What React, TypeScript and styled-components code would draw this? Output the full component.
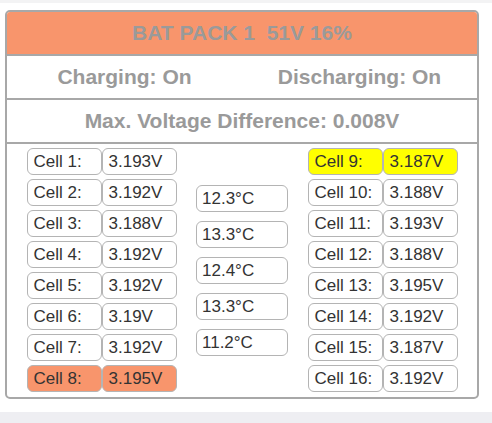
import styled, { createGlobalStyle } from "styled-components";

const GlobalStyle = createGlobalStyle`
  html, body {
    margin: 0;
    padding: 0;
    background: #ffffff;
    font-family: "Liberation Sans", Arial, sans-serif;
  }
`;

type Cell = { name: string; volt: string; tone?: "low" | "high" };

const leftCells: Cell[] = [
  { name: "Cell 1:", volt: "3.193V" },
  { name: "Cell 2:", volt: "3.192V" },
  { name: "Cell 3:", volt: "3.188V" },
  { name: "Cell 4:", volt: "3.192V" },
  { name: "Cell 5:", volt: "3.192V" },
  { name: "Cell 6:", volt: "3.19V" },
  { name: "Cell 7:", volt: "3.192V" },
  { name: "Cell 8:", volt: "3.195V", tone: "high" },
];

const rightCells: Cell[] = [
  { name: "Cell 9:", volt: "3.187V", tone: "low" },
  { name: "Cell 10:", volt: "3.188V" },
  { name: "Cell 11:", volt: "3.193V" },
  { name: "Cell 12:", volt: "3.188V" },
  { name: "Cell 13:", volt: "3.195V" },
  { name: "Cell 14:", volt: "3.192V" },
  { name: "Cell 15:", volt: "3.187V" },
  { name: "Cell 16:", volt: "3.192V" },
];

const temps = ["12.3°C", "13.3°C", "12.4°C", "13.3°C", "11.2°C"];

const App: React.FC = () => {
  return (
    <>
      <GlobalStyle />
      <Page>
        <TopStrip />
        <Main>
          <Panel>
            <Header>BAT PACK 1&nbsp;&nbsp;51V 16%</Header>
            <StatusRow>
              <span>Charging: On</span>
              <span>Discharging: On</span>
            </StatusRow>
            <InfoRow>Max. Voltage Difference: 0.008V</InfoRow>
            <CellsArea>
              <CellColumn>
                {leftCells.map((c) => (
                  <CellPair key={c.name}>
                    <Box $tone={c.tone}>{c.name}</Box>
                    <Box $tone={c.tone}>{c.volt}</Box>
                  </CellPair>
                ))}
              </CellColumn>
              <TempColumn>
                {temps.map((t, i) => (
                  <TempBox key={i}>{t}</TempBox>
                ))}
              </TempColumn>
              <CellColumn>
                {rightCells.map((c) => (
                  <CellPair key={c.name}>
                    <Box $tone={c.tone}>{c.name}</Box>
                    <Box $tone={c.tone}>{c.volt}</Box>
                  </CellPair>
                ))}
              </CellColumn>
            </CellsArea>
          </Panel>
        </Main>
        <BottomStrip />
      </Page>
    </>
  );
};

const Page = styled.div`
  height: 423px;
  display: flex;
  flex-direction: column;
`;

const TopStrip = styled.div`
  height: 3px;
  background: #f3f3f4;
`;

const Main = styled.div`
  flex: 1;
  padding: 7px 0 0 5px;
`;

const BottomStrip = styled.div`
  height: 11px;
  background: #eeeef2;
`;

const Panel = styled.div`
  width: 470px;
  border: 2px solid #a8a8a8;
  border-radius: 5px;
  overflow: hidden;
  background: #ffffff;
`;

const Header = styled.div`
  height: 42px;
  background: #f8956c;
  color: #9a9a9a;
  font-weight: bold;
  font-size: 21px;
  display: flex;
  align-items: center;
  justify-content: center;
`;

const StatusRow = styled.div`
  height: 42px;
  border-top: 2px solid #a8a8a8;
  display: grid;
  grid-template-columns: 1fr 1fr;
  align-items: center;
  justify-items: center;
  color: #9a9a9a;
  font-weight: bold;
  font-size: 21px;
`;

const InfoRow = styled.div`
  height: 42px;
  border-top: 2px solid #a8a8a8;
  display: flex;
  align-items: center;
  justify-content: center;
  color: #9a9a9a;
  font-weight: bold;
  font-size: 21px;
`;

const CellsArea = styled.div`
  border-top: 2px solid #a8a8a8;
  padding: 4px 0 5px;
  display: flex;
  justify-content: space-evenly;
  align-items: center;
`;

const CellColumn = styled.div`
  display: flex;
  flex-direction: column;
  gap: 4px;
`;

const CellPair = styled.div`
  display: flex;
`;

const toneBg = { low: "#ffff00", high: "#f8956c" } as const;

const Box = styled.div<{ $tone?: "low" | "high" }>`
  box-sizing: border-box;
  width: 75px;
  height: 27px;
  line-height: 25px;
  padding-left: 6px;
  border: 1px solid #b4b4b4;
  border-radius: 6px;
  background: ${(p) => (p.$tone ? toneBg[p.$tone] : "#ffffff")};
  color: #333333;
  font-size: 17px;
  white-space: nowrap;
`;

const TempColumn = styled.div`
  display: flex;
  flex-direction: column;
  gap: 9px;
`;

const TempBox = styled.div`
  box-sizing: border-box;
  width: 92px;
  height: 27px;
  line-height: 25px;
  padding-left: 5px;
  border: 1px solid #b4b4b4;
  border-radius: 6px;
  color: #333333;
  font-size: 17px;
`;

export default App;
